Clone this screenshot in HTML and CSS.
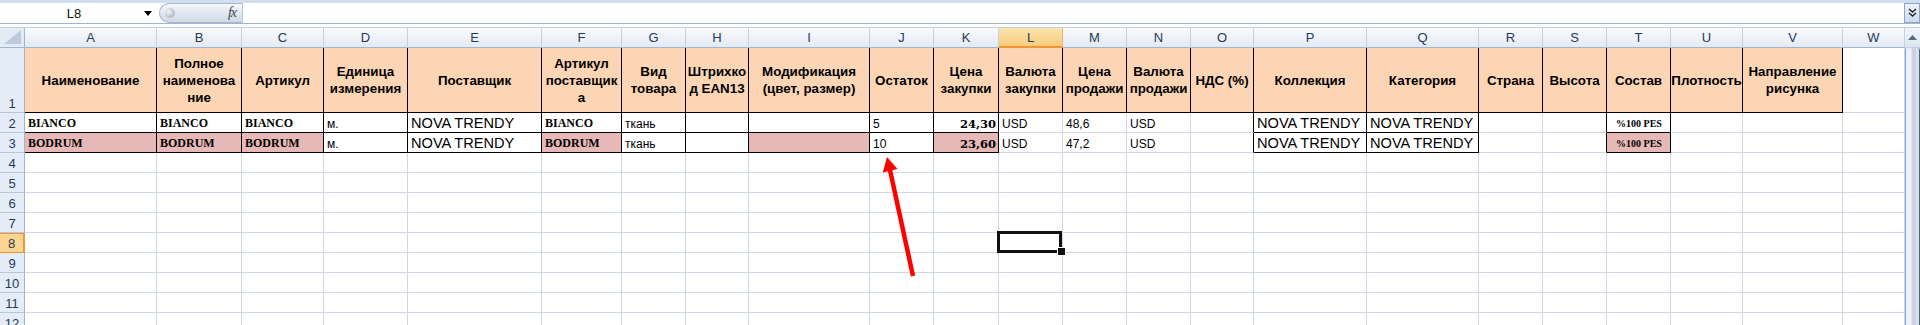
FILE: index.html
```html
<!DOCTYPE html>
<html lang="ru">
<head>
    <meta charset="UTF-8">
    <meta name="viewport" content="width=device-width, initial-scale=1.0">
    <title>Товары</title>
    <link rel="stylesheet" href="styles.css">
</head>
<body>
    <div class="formula-bar">
        <div class="name-box">
            <span class="name-value">L8</span>
            <svg class="name-drop" width="8" height="5" viewBox="0 0 8 5"><polygon points="0,0 8,0 4,5" fill="#000"/></svg>
        </div>
        <div class="fx-pill">
            <span class="knob"></span>
            <span class="fx">fx</span>
        </div>
        <div class="formula-input"></div>
        <div class="expand-button">
            <svg width="9" height="10" viewBox="0 0 9 10"><path d="M1 1 L4.5 4 L8 1 M1 5 L4.5 8 L8 5" fill="none" stroke="#222" stroke-width="1.4"/></svg>
        </div>
    </div>
    <div class="bar-gap"></div>

    <div class="workspace">
        <div class="sheet" id="sheet"></div>
        <div class="vscroll">
            <div class="scroll-up">
                <svg width="9" height="5" viewBox="0 0 9 5"><polygon points="0,5 9,5 4.5,0" fill="#59687c"/></svg>
            </div>
            <div class="scroll-thumb"></div>
        </div>
    </div>

    <svg class="annotation" width="1920" height="325" viewBox="0 0 1920 325">
        <line x1="913" y1="276" x2="890" y2="170" stroke="#ff0000" stroke-width="4.5"/>
        <polygon points="887,157 897.5,169 882.8,172.4" fill="#ff0000"/>
    </svg>

    <script>
        const letters = 'ABCDEFGHIJKLMNOPQRSTUVW'.split('');
        const widths = [132, 85, 82, 84, 134, 80, 64, 63, 121, 64, 65, 64, 64, 64, 63, 113, 112, 64, 64, 64, 72, 100, 62];

        const titles = [
            'Наименование', 'Полное<br>наименова<br>ние', 'Артикул', 'Единица<br>измерения', 'Поставщик',
            'Артикул<br>поставщик<br>а', 'Вид<br>товара', 'Штрихко<br>д EAN13', 'Модификация<br>(цвет, размер)',
            'Остаток', 'Цена<br>закупки', 'Валюта<br>закупки', 'Цена<br>продажи', 'Валюта<br>продажи',
            'НДС (%)', 'Коллекция', 'Категория', 'Страна', 'Высота', 'Состав', 'Плотность', 'Направление<br>рисунка'
        ];

        // text, font class
        const rows = {
            2: {
                A: ['BIANCO', 'serif'], B: ['BIANCO', 'serif'], C: ['BIANCO', 'serif'], D: ['м.', 'small'],
                E: ['NOVA TRENDY', 'large'], F: ['BIANCO', 'serif'], G: ['ткань', 'small'], J: ['5', 'small'],
                K: ['24,30', 'num'], L: ['USD', 'small'], M: ['48,6', 'small'], N: ['USD', 'small'],
                P: ['NOVA TRENDY', 'large'], Q: ['NOVA TRENDY', 'large'], T: ['%100 PES', 'tiny']
            },
            3: {
                A: ['BODRUM', 'serif'], B: ['BODRUM', 'serif'], C: ['BODRUM', 'serif'], D: ['м.', 'small'],
                E: ['NOVA TRENDY', 'large'], F: ['BODRUM', 'serif'], G: ['ткань', 'small'], J: ['10', 'small'],
                K: ['23,60', 'num'], L: ['USD', 'small'], M: ['47,2', 'small'], N: ['USD', 'small'],
                P: ['NOVA TRENDY', 'large'], Q: ['NOVA TRENDY', 'large'], T: ['%100 PES', 'tiny']
            }
        };
        const pinkCells = ['A3', 'B3', 'C3', 'F3', 'I3', 'K3', 'T3'];
        const boxedCols = 'ABCDEFGHIJKPQT';
        const activeCell = 'L8';

        function boxed(r, c) {
            if (c < 0 || c >= letters.length) return false;
            if (r === 1) return c <= 21;
            if (r === 2 || r === 3) return boxedCols.includes(letters[c]);
            return false;
        }

        const sheet = document.getElementById('sheet');
        sheet.style.gridTemplateColumns = '25px ' + widths.map(w => w + 'px').join(' ');

        // column headers
        const corner = document.createElement('div');
        corner.className = 'corner';
        corner.innerHTML = '<svg width="17" height="14" viewBox="0 0 17 14"><polygon points="0,14 17,14 17,0" fill="#bccadb"/></svg>';
        sheet.appendChild(corner);
        letters.forEach(l => {
            const h = document.createElement('div');
            h.className = 'col-head' + (l === activeCell[0] ? ' selected' : '');
            h.textContent = l;
            sheet.appendChild(h);
        });

        for (let r = 1; r <= 12; r++) {
            const rh = document.createElement('div');
            rh.className = 'row-head' + (r === 1 ? ' tall' : '') + (String(r) === activeCell.slice(1) ? ' selected' : '');
            rh.textContent = r;
            sheet.appendChild(rh);

            letters.forEach((l, c) => {
                const cell = document.createElement('div');
                const cls = ['cell'];
                if (boxed(r, c) || boxed(r, c + 1)) cls.push('br');
                if (boxed(r, c) || boxed(r + 1, c)) cls.push('bb');
                if (l + r === activeCell) cls.push('active');

                if (r === 1) {
                    cls.push('title');
                    if (c <= 21) {
                        cls.push('peach');
                        cell.innerHTML = '<span>' + titles[c] + '</span>';
                    }
                } else if (rows[r] && rows[r][l]) {
                    const [text, font] = rows[r][l];
                    cls.push(font);
                    cell.textContent = text;
                }
                if (pinkCells.includes(l + r)) cls.push('pink');

                cell.className = cls.join(' ');
                sheet.appendChild(cell);
            });
        }
    </script>
</body>
</html>
```

FILE: styles.css
```css
* {
    box-sizing: border-box;
}

html, body {
    margin: 0;
}

body {
    width: 1920px;
    height: 325px;
    overflow: hidden;
    position: relative;
    background: #d3deec;
    font-family: 'Liberation Sans', Arial, sans-serif;
    padding-top: 3px;
}

/* formula bar */

.formula-bar {
    display: flex;
    height: 20px;
    background: #fff;
}

.name-box {
    width: 159px;
    display: flex;
    align-items: center;
    padding-right: 7px;
    font-size: 13px;
    color: #111;
}

.name-value {
    flex: 1;
    text-align: center;
    padding-left: 4px;
}

.fx-pill {
    width: 84px;
    display: flex;
    align-items: center;
    justify-content: space-between;
    padding: 0 6px 0 5px;
    border: 1px solid #a7b8cf;
    border-right-color: #b9c7d8;
    border-radius: 10px 0 0 10px;
    background: linear-gradient(#f6f8fb, #dfe6f0 55%, #cfd9e7);
}

.knob {
    width: 10px;
    height: 10px;
    border-radius: 50%;
    background: radial-gradient(circle at 35% 35%, #f4f4f4, #b5bcc6 70%, #9aa3ae);
}

.fx {
    font-family: 'Liberation Serif', 'Times New Roman', serif;
    font-style: italic;
    font-size: 14px;
    color: #444;
    letter-spacing: -1px;
}

.formula-input {
    flex: 1;
    background: #fff;
}

.expand-button {
    width: 16px;
    display: flex;
    align-items: center;
    justify-content: center;
    border: 1px solid #8da5c8;
    background: linear-gradient(#eef3fa, #cdd9ea);
}

.bar-gap {
    height: 5px;
    background: #fff;
    border-top: 1px solid #a2b4cb;
    border-bottom: 1px solid #c2cfe0;
}

/* sheet */

.workspace {
    display: flex;
}

.sheet {
    width: 1905px;
    display: grid;
    grid-template-rows: 20px 65px repeat(11, 20px);
    background: #fff;
}

.corner {
    background: #e4ebf5;
    border-right: 1px solid #9eb6ce;
    border-bottom: 1px solid #9eb6ce;
    display: flex;
    align-items: flex-end;
    justify-content: flex-end;
    padding: 0 3px 3px 0;
}

.col-head {
    background: linear-gradient(#f9fafd, #e4eaf3);
    border-right: 1px solid #c5d1e1;
    border-bottom: 1px solid #9eb6ce;
    display: flex;
    align-items: center;
    justify-content: center;
    font-size: 13px;
    color: #243a58;
}

.col-head.selected {
    background: linear-gradient(#fbe3ae, #f6cd7e);
    border-right-color: #f1b45a;
    border-bottom: 2px solid #f29536;
}

.row-head {
    background: #e4ecf7;
    border-right: 1px solid #9eb6ce;
    border-bottom: 1px solid #b6c7da;
    display: flex;
    align-items: flex-end;
    justify-content: center;
    font-size: 13px;
    color: #243a58;
    padding-bottom: 1px;
}

.row-head.selected {
    background: #fcd592;
    border-right: 2px solid #f29536;
    border-bottom-color: #f29536;
    box-shadow: inset 0 1px 0 #f29536;
}

.cell {
    border-right: 1px solid #d0d7e5;
    border-bottom: 1px solid #d0d7e5;
    display: flex;
    align-items: flex-end;
    padding: 0 2px 1px 3px;
    white-space: nowrap;
    min-width: 0;
    color: #000;
}

.cell.br {
    border-right-color: #000;
}

.cell.bb {
    border-bottom-color: #000;
}

.cell.title {
    align-items: center;
    justify-content: center;
    text-align: center;
    font-weight: bold;
    font-size: 13.33px;
    line-height: 17px;
    padding: 0 1px;
}

.peach {
    background: #fcd5b4;
}

.pink {
    background: #e6b8b7;
}

.serif {
    font-family: 'Liberation Serif', 'Times New Roman', serif;
    font-weight: bold;
    font-size: 12px;
}

.small {
    font-size: 12px;
}

.large {
    font-size: 14.6px;
}

.num {
    font-family: 'DejaVu Serif', serif;
    font-weight: bold;
    font-size: 11.5px;
    justify-content: flex-end;
    padding-right: 2px;
}

.tiny {
    font-family: 'Liberation Serif', 'Times New Roman', serif;
    font-weight: bold;
    font-size: 10px;
    justify-content: center;
    padding-bottom: 3px;
}

.cell.active {
    position: relative;
}

.cell.active::before {
    content: '';
    position: absolute;
    top: -2px;
    left: -2px;
    right: 0;
    bottom: -1px;
    border: 3px solid #111;
}

.cell.active::after {
    content: '';
    position: absolute;
    right: -4px;
    bottom: -4px;
    width: 7px;
    height: 7px;
    background: #111;
    border: 1px solid #fff;
}

/* scrollbar */

.vscroll {
    width: 15px;
    display: flex;
    flex-direction: column;
    background: #e6edf6;
}

.scroll-up {
    height: 20px;
    display: flex;
    align-items: center;
    justify-content: center;
    background: linear-gradient(#f3f6fa, #dce5f1);
    border-bottom: 1px solid #c3cfdf;
}

.scroll-thumb {
    flex: 1;
    border-left: 1px solid #7f9dd0;
    border-right: 1px solid #4d6183;
    border-radius: 2px 2px 0 0;
    background: linear-gradient(90deg, #eef2f8 0, #eef2f8 40%, #c8d4e5 45%, #c8d4e5 75%, #d9e1ed 80%);
}

/* annotation */

.annotation {
    position: absolute;
    left: 0;
    top: 0;
    pointer-events: none;
}
```
